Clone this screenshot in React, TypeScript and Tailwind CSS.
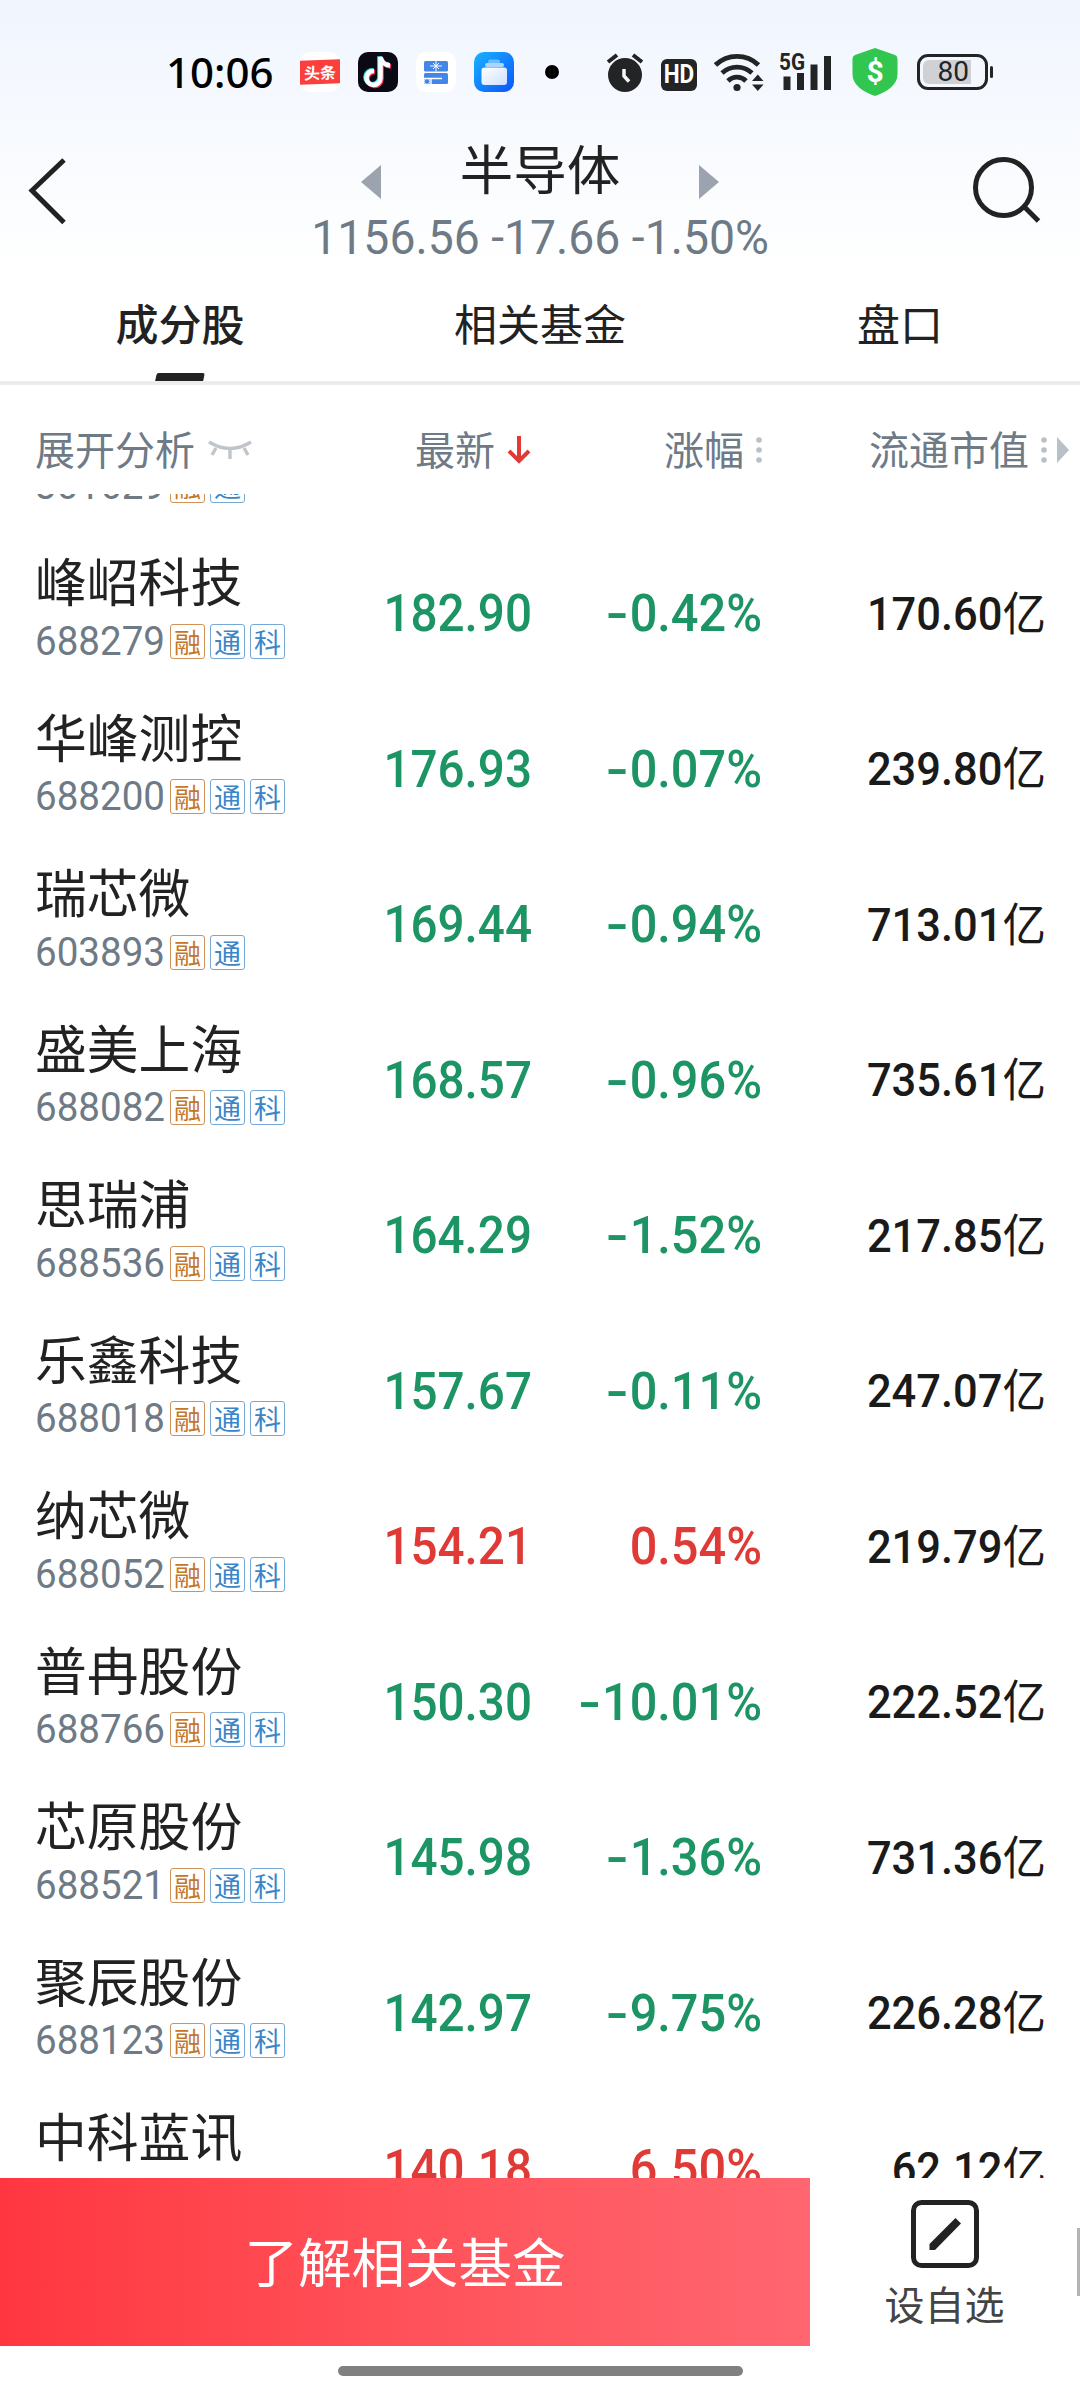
import clsx from "clsx";

type Tag = "融" | "通" | "科";

interface Stock {
  name: string;
  code: string;
  tags: Tag[];
  price: string;
  change: string;
  cap: string;
  up?: boolean;
}

const stocks: Stock[] = [
  { name: "", code: "301629", tags: ["融", "通"], price: "", change: "", cap: "" },
  { name: "峰岹科技", code: "688279", tags: ["融", "通", "科"], price: "182.90", change: "-0.42%", cap: "170.60" },
  { name: "华峰测控", code: "688200", tags: ["融", "通", "科"], price: "176.93", change: "-0.07%", cap: "239.80" },
  { name: "瑞芯微", code: "603893", tags: ["融", "通"], price: "169.44", change: "-0.94%", cap: "713.01" },
  { name: "盛美上海", code: "688082", tags: ["融", "通", "科"], price: "168.57", change: "-0.96%", cap: "735.61" },
  { name: "思瑞浦", code: "688536", tags: ["融", "通", "科"], price: "164.29", change: "-1.52%", cap: "217.85" },
  { name: "乐鑫科技", code: "688018", tags: ["融", "通", "科"], price: "157.67", change: "-0.11%", cap: "247.07" },
  { name: "纳芯微", code: "688052", tags: ["融", "通", "科"], price: "154.21", change: "0.54%", cap: "219.79", up: true },
  { name: "普冉股份", code: "688766", tags: ["融", "通", "科"], price: "150.30", change: "-10.01%", cap: "222.52" },
  { name: "芯原股份", code: "688521", tags: ["融", "通", "科"], price: "145.98", change: "-1.36%", cap: "731.36" },
  { name: "聚辰股份", code: "688123", tags: ["融", "通", "科"], price: "142.97", change: "-9.75%", cap: "226.28" },
  { name: "中科蓝讯", code: "", tags: [], price: "140.18", change: "6.50%", cap: "62.12", up: true },
];

const NOTE = "M16 19a7 7 0 1 0 6.500 7V5c.5 4.500 4 8 9.500 8.500";

function StatusBar() {
  return (
    <div className="flex h-[144px] items-center pl-[166px] text-[#222426]">
      <span className="w-[134px] font-['Noto_Sans'] text-[42px] font-medium leading-none text-black">
        10:06
      </span>
      <div className="flex items-center gap-[18px]">
        <div className="flex size-[40px] items-center rounded-[10px] bg-white">
          <div className="flex h-[24px] w-[40px] -skew-y-2 items-center justify-center bg-[#fb3f3d] text-[16px] font-bold leading-none text-white">
            头条
          </div>
        </div>
        <svg className="size-[40px]" viewBox="0 0 40 40">
          <rect width="40" height="40" rx="10" fill="#0b0a14" />
          <g fill="none" strokeWidth="4.6">
            <path d={NOTE} transform="translate(-1 -.8)" stroke="#2ce5e3" />
            <path d={NOTE} transform="translate(1 1)" stroke="#f8305a" />
            <path d={NOTE} stroke="#fff" />
          </g>
        </svg>
        <svg className="size-[40px]" viewBox="0 0 40 40">
          <rect width="40" height="40" rx="10" fill="#fff" />
          <rect x="8" y="9" width="24" height="10.5" rx="1.5" fill="#4186e8" />
          <rect x="8" y="21" width="24" height="11" rx="1.5" fill="#4186e8" />
          <path d="M20 9v10.5M14 14h12M17 11l6 6M23 11l-6 6" stroke="#fff" />
          <path d="M8 26.5h18M15 27v5" stroke="#fff" strokeWidth="1.4" />
          <circle cx="11" cy="29.5" r="2.8" fill="#4186e8" stroke="#fff" strokeWidth=".8" />
        </svg>
        <svg className="size-[40px]" viewBox="0 0 40 40">
          <defs>
            <linearGradient id="cards" x1="0" y1="0" x2="1" y2="1">
              <stop stopColor="#1ab2ff" />
              <stop offset="1" stopColor="#0a55fb" />
            </linearGradient>
            <linearGradient id="face" x1="0" y1="0" x2="1" y2="1">
              <stop stopColor="#fff" />
              <stop offset="1" stopColor="#cfe0ff" />
            </linearGradient>
          </defs>
          <rect width="40" height="40" rx="10" fill="url(#cards)" />
          <rect x="14" y="7.5" width="12" height="4" rx="2" fill="#6cbcff" />
          <rect x="11" y="11" width="19" height="4" rx="2" fill="#a9d5ff" />
          <rect x="7.5" y="15.5" width="25.5" height="17.5" rx="3" fill="url(#face)" />
        </svg>
      </div>
      <div className="ml-[31px] size-[14px] rounded-full bg-black" />

      <svg className="ml-[47px] h-[40px] w-[38px]" viewBox="0 0 38 40">
        <circle cx="19" cy="23" r="17" fill="currentColor" />
        <path d="M2 10l9-7M36 10l-9-7" stroke="currentColor" strokeWidth="4" />
        <path d="M18 17v7l5 5.5" fill="none" stroke="#f4f8fe" strokeWidth="3.5" />
      </svg>
      <div className="ml-[17px] mt-[5px] flex h-[32px] w-[36px] items-center justify-center rounded-[6px] bg-[#222426]">
        <span className="scale-x-90 font-['Roboto'] text-[25px] font-bold leading-none text-white">HD</span>
      </div>
      <svg className="ml-[17px] h-[40px] w-[50px]" viewBox="0 0 50 40">
        <g fill="none" stroke="currentColor" strokeWidth="4.8">
          <path d="M1.500 13a31 31 0 0 1 43 0" />
          <path d="M8 21a22 22 0 0 1 30 0" />
          <path d="M14 29a12.500 12.500 0 0 1 18 0" />
        </g>
        <circle cx="23" cy="35.5" r="3.6" fill="currentColor" />
        <path d="M38 29h11.500l-5.700-6.500zM38 32.500h11.500l-5.700 6.500z" fill="currentColor" />
      </svg>
      <svg className="ml-[15px] h-[40px] w-[54px]" viewBox="0 0 54 40">
        <text x="0" y="17.5" fontFamily="Roboto" fontSize="23" fontWeight="700" fill="currentColor" textLength="26" lengthAdjust="spacingAndGlyphs">
          5G
        </text>
        <path d="M8 24.500v13.500M21.500 21v17M35 12.500V38M48.500 4v34" stroke="currentColor" strokeWidth="7" />
      </svg>
      <svg className="ml-[19px] h-[50px] w-[46px]" viewBox="0 0 46 50">
        <path d="M23 1l20 7q2.500 1 2.500 4v15c0 11-10 17.500-22.500 22C10.500 44.500.5 38 .5 27V12q0-3 2.500-4z" fill="#31c64f" />
        <text x="23" y="35" textAnchor="middle" fontFamily="Roboto" fontSize="30" fontWeight="700" fill="#fff">
          $
        </text>
      </svg>
      <div className="ml-[19px] flex h-[36px] w-[71px] items-center rounded-[11px] border-[3px] border-[#222426] p-[3px]">
        <div className="flex h-[24px] w-[48px] items-center justify-end rounded-l-[6px] bg-[#cfd1d5] pr-[2px]">
          <span className="font-['Roboto'] text-[28px] leading-none text-[#222426]">80</span>
        </div>
      </div>
      <div className="ml-[2px] h-[12px] w-[3px] rounded-full bg-[#222426]" />
    </div>
  );
}

function TitleBar() {
  return (
    <div className="flex h-[132px] justify-between text-[#222]">
      <div className="w-[300px] pt-[12px] pl-[27px]">
        <svg className="h-[70px] w-[42px]" viewBox="0 0 42 70">
          <path d="M37 4L5 34.500 37 66.500" fill="none" stroke="currentColor" strokeWidth="5" />
        </svg>
      </div>
      <div className="flex w-[480px] flex-col items-center">
        <div className="-mt-[12px] flex h-[70px] w-[358px] items-center justify-between">
          <svg className="mt-[30px] h-[34px] w-[20px]" viewBox="0 0 20 34">
            <path d="M20 0v34L0 17z" fill="#9ba4ae" />
          </svg>
          <h1 className="text-[53.5px] leading-none">半导体</h1>
          <svg className="mt-[30px] h-[34px] w-[20px]" viewBox="0 0 20 34">
            <path d="M0 0v34l20-17z" fill="#9ba4ae" />
          </svg>
        </div>
        <p className="mt-[11px] scale-x-[.965] whitespace-nowrap font-['Roboto'] text-[48px] leading-[50px] text-[#6e7a85]">
          1156.56 -17.66 -1.50%
        </p>
      </div>
      <div className="flex w-[300px] justify-end pt-[12px] pr-[37px]">
        <svg className="h-[70px] w-[72px]" viewBox="0 0 72 70">
          <circle cx="32.5" cy="31.5" r="28" fill="none" stroke="currentColor" strokeWidth="5" />
          <path d="M53 50.500l14.500 14.500" stroke="currentColor" strokeWidth="5" />
        </svg>
      </div>
    </div>
  );
}

function Tabs() {
  return (
    <div className="grid h-[109px] grid-cols-3 border-b-[4px] border-[#eaecee] text-center text-[43px] leading-[92px] text-[#222]">
      <div className="flex flex-col items-center font-medium">
        <span className="h-[97px]">成分股</span>
        <span className="h-[8px] w-[48px] -skew-x-12 rounded-t-[2px] bg-[#222]" />
      </div>
      <span>相关基金</span>
      <span>盘口</span>
    </div>
  );
}

function Dots() {
  return (
    <svg className="h-[28px] w-[6px]" viewBox="0 0 6 28" fill="#b9c0c6">
      <circle cx="3" cy="4" r="2.8" />
      <circle cx="3" cy="14" r="2.8" />
      <circle cx="3" cy="24" r="2.8" />
    </svg>
  );
}

function ColumnHeader() {
  return (
    <div className="flex h-[109px] items-center pt-[20px] text-[40px] leading-none text-[#6e7a85]">
      <div className="flex w-[380px] items-center gap-[13px] pl-[35px]">
        <span className="-mt-[4px]">展开分析</span>
        <svg className="h-[20px] w-[44px]" viewBox="0 0 44 20" fill="none" stroke="#c0c5ca" strokeWidth="3.4">
          <path d="M1 2q21 13 42 0M8 8l-4 7M22 9v10M36 8l4 7" />
        </svg>
      </div>
      <div className="flex w-[151px] items-center justify-end gap-[12px]">
        <span className="-mt-[4px]">最新</span>
        <svg className="h-[28px] w-[24px]" viewBox="0 0 24 28" fill="none" stroke="#e03a37" strokeWidth="4">
          <path d="M12 0v25M2 15l10 10 10-10" />
        </svg>
      </div>
      <div className="flex w-[231px] items-center justify-end gap-[12px]">
        <span className="-mt-[4px]">涨幅</span>
        <Dots />
      </div>
      <div className="flex w-[307px] items-center justify-end gap-[10px]">
        <span className="-mt-[4px] mr-[2px]">流通市值</span>
        <Dots />
        <svg className="h-[26px] w-[12px]" viewBox="0 0 12 26">
          <path d="M0 0v26l12-13z" fill="#b9c0c6" />
        </svg>
      </div>
    </div>
  );
}

function StockRow({ stock }: { stock: Stock }) {
  const tone = stock.up ? "text-[#e03a37]" : "text-[#1c9464]";
  const down = stock.change.startsWith("-");
  return (
    <li className="flex h-[155.5px] items-center">
      <div className="w-[332px] self-start pt-[14px] pl-[35px]">
        <h2 className="h-[60px] text-[51.8px] leading-[60px] text-[#222]">{stock.name}</h2>
        <div className="mt-[13px] flex h-[36px] items-center">
          <span className="w-[135px] origin-left scale-x-[.94] font-['Roboto'] text-[41px] leading-none text-[#6e7a85]">
            {stock.code}
          </span>
          <div className="flex gap-[5px]">
            {stock.tags.map((t) => (
              <span
                key={t}
                className={clsx(
                  "flex h-[35px] w-[35px] items-center justify-center rounded-[3px] border text-[27px] leading-none",
                  t === "融" ? "border-[#cf9258] text-[#c4762b]" : "border-[#76a9d6] text-[#3c85c6]",
                )}
              >
                {t}
              </span>
            ))}
          </div>
        </div>
      </div>
      <span className={clsx("w-[200px] origin-right scale-x-[.925] text-right font-['Roboto'] text-[51.5px] font-medium leading-none", tone)}>
        {stock.price}
      </span>
      <span className={clsx("w-[230px] origin-right scale-x-[.945] text-right font-['Roboto'] text-[51.5px] font-medium leading-none", tone)}>
        {down && <span className="mr-[4px] inline-block scale-x-[1.35]">-</span>}
        {stock.change.replace("-", "")}
      </span>
      <span className="w-[284px] origin-right scale-x-[.945] text-right font-['Roboto','Noto_Sans_CJK_SC',sans-serif] text-[46px] font-medium leading-none text-[#1a1a1a]">
        {stock.cap}
        {stock.cap && <span className="font-normal">亿</span>}
      </span>
    </li>
  );
}

function BottomBar() {
  return (
    <div className="flex h-[168px] items-stretch">
      <button className="w-[810px] bg-linear-to-r from-[#ff3640] to-[#ff6670] pb-[4px] text-[53.5px] text-white">
        了解相关基金
      </button>
      <div className="flex w-[267px] flex-col items-center pt-[22px] pl-[2px]">
        <svg className="h-[68px] w-[68px]" viewBox="0 0 68 68">
          <rect x="2.5" y="2.5" width="63" height="63" rx="8" fill="none" stroke="#222" strokeWidth="5" />
          <path d="M18.500 50v-6l26-26 5.500 5.500L24 50z" fill="#222" />
        </svg>
        <span className="mt-[15px] text-[40px] leading-[40px] text-[#444]">设自选</span>
      </div>
      <div className="mt-[50px] h-[68px] w-[3px] bg-[#b3b3b3]" />
    </div>
  );
}

export default function App() {
  return (
    <div className="flex h-[2400px] w-[1080px] flex-col overflow-hidden bg-[linear-gradient(180deg,#f0f5fe_0px,#ffffff_270px)] font-['Noto_Sans_CJK_SC',sans-serif]">
      <StatusBar />
      <TitleBar />
      <Tabs />
      <ColumnHeader />
      {/* list is scrolled, so the first and last rows are cut off */}
      <div className="h-[1684px] overflow-hidden">
        <ul className="-mt-[113.5px]">
          {stocks.map((s) => (
            <StockRow key={s.name} stock={s} />
          ))}
        </ul>
      </div>
      <BottomBar />
      <div className="mx-auto mt-[20px] h-[10px] w-[405px] rounded-full bg-[#808080]" />
    </div>
  );
}
